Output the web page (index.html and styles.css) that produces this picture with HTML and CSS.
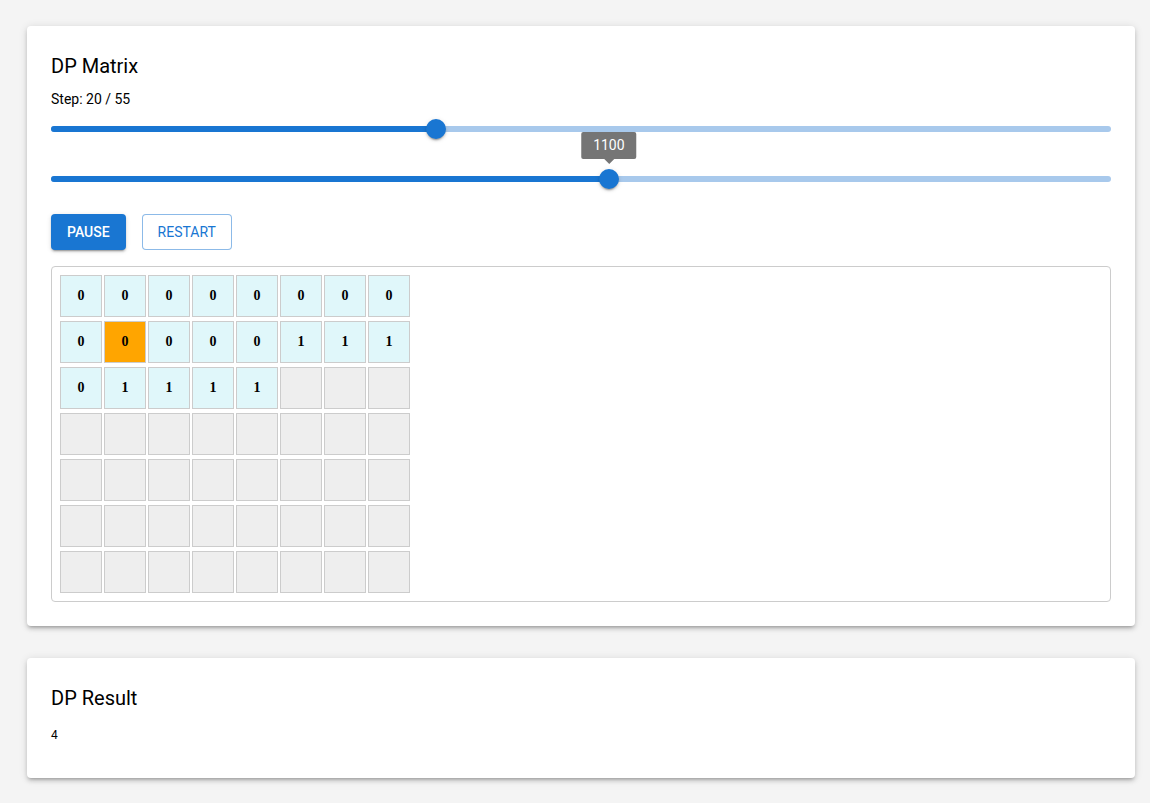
FILE: index.html
```html
<!DOCTYPE html>
<html>
<head>
<meta charset="utf-8">
<link rel="stylesheet" href="styles.css">
</head>
<body>
<div class="page">
  <div class="card">
    <div class="title">DP Matrix</div>
    <div class="step">Step: 20 / 55</div>
    <div class="slider">
      <div class="rail"></div>
      <div class="track" style="width:36.36%"></div>
      <div class="thumb" style="left:36.36%"></div>
    </div>
    <div class="slider">
      <div class="rail"></div>
      <div class="track" style="width:52.63%"></div>
      <div class="thumb" style="left:52.63%"><span class="label">1100</span></div>
    </div>
    <div class="buttons">
      <button class="btn contained">PAUSE</button>
      <button class="btn outlined">RESTART</button>
    </div>
    <div class="matrix">
      <div class="grid">
        <div class="cell done">0</div><div class="cell done">0</div><div class="cell done">0</div><div class="cell done">0</div><div class="cell done">0</div><div class="cell done">0</div><div class="cell done">0</div><div class="cell done">0</div>
        <div class="cell done">0</div><div class="cell current">0</div><div class="cell done">0</div><div class="cell done">0</div><div class="cell done">0</div><div class="cell done">1</div><div class="cell done">1</div><div class="cell done">1</div>
        <div class="cell done">0</div><div class="cell done">1</div><div class="cell done">1</div><div class="cell done">1</div><div class="cell done">1</div><div class="cell"></div><div class="cell"></div><div class="cell"></div>
        <div class="cell"></div><div class="cell"></div><div class="cell"></div><div class="cell"></div><div class="cell"></div><div class="cell"></div><div class="cell"></div><div class="cell"></div>
        <div class="cell"></div><div class="cell"></div><div class="cell"></div><div class="cell"></div><div class="cell"></div><div class="cell"></div><div class="cell"></div><div class="cell"></div>
        <div class="cell"></div><div class="cell"></div><div class="cell"></div><div class="cell"></div><div class="cell"></div><div class="cell"></div><div class="cell"></div><div class="cell"></div>
        <div class="cell"></div><div class="cell"></div><div class="cell"></div><div class="cell"></div><div class="cell"></div><div class="cell"></div><div class="cell"></div><div class="cell"></div>
      </div>
    </div>
  </div>
  <div class="card result">
    <div class="title">DP Result</div>
    <div class="value">4</div>
  </div>
</div>
</body>
</html>
```

FILE: styles.css
```css
* { box-sizing: border-box; }
html, body { margin: 0; padding: 0; }
body {
  background: #f4f4f4;
  font-family: Roboto, "Liberation Sans", Arial, sans-serif;
  color: #000;
  height: 803px;
  overflow: hidden;
}
.page {
  padding: 26px 15px 0 27px;
  display: flex;
  flex-direction: column;
  gap: 32px;
}
.card {
  background: #fff;
  border-radius: 4px;
  padding: 24px;
  box-shadow: 0 3px 3px -2px rgba(0,0,0,0.2), 0 3px 4px 0 rgba(0,0,0,0.14), 0 1px 8px 0 rgba(0,0,0,0.12);
}
.title {
  font-size: 20px;
  line-height: 32px;
  font-weight: 400;
  margin-bottom: 7px;
}
.step {
  font-size: 14px;
  line-height: 20px;
  margin-bottom: 5px;
}
.slider {
  position: relative;
  height: 30px;
  margin-bottom: 20px;
}
.rail, .track {
  position: absolute;
  left: 0;
  top: 12px;
  height: 6px;
  border-radius: 3px;
}
.rail { right: 0; background: #a8c9ec; }
.track { background: #1976d2; }
.thumb {
  position: absolute;
  top: 5px;
  width: 20px;
  height: 20px;
  margin-left: -10px;
  border-radius: 50%;
  background: #1976d2;
  box-shadow: 0 3px 1px -2px rgba(0,0,0,0.2), 0 2px 2px 0 rgba(0,0,0,0.14), 0 1px 5px 0 rgba(0,0,0,0.12);
}
.label {
  position: absolute;
  left: 50%;
  bottom: 30px;
  transform: translateX(-50%);
  background: #757575;
  color: #fff;
  font-size: 14px;
  font-weight: 400;
  line-height: 19px;
  padding: 4px 12px;
  border-radius: 2px;
  white-space: nowrap;
}
.label::after {
  content: "";
  position: absolute;
  left: 50%;
  bottom: -5px;
  margin-left: -5px;
  border-left: 5px solid transparent;
  border-right: 5px solid transparent;
  border-top: 5px solid #757575;
}
.buttons {
  display: flex;
  gap: 16px;
  margin-top: 0;
  margin-bottom: 16px;
}
.btn {
  font-family: Roboto, "Liberation Sans", Arial, sans-serif;
  font-size: 14px;
  font-weight: 500;
  height: 36px;
  line-height: 24px;
  border-radius: 4px;
  letter-spacing: 0;
  padding: 6px 16px;
}
.contained {
  background: #1976d2;
  color: #fff;
  border: none;
  box-shadow: 0 3px 1px -2px rgba(0,0,0,0.2), 0 2px 2px 0 rgba(0,0,0,0.14), 0 1px 5px 0 rgba(0,0,0,0.12);
}
.outlined {
  background: #fff;
  color: #1976d2;
  border: 1px solid rgba(25,118,210,0.5);
  font-weight: 400;
  padding: 5px 15px;
}
.matrix {
  border: 1px solid #ccc;
  border-radius: 4px;
  padding: 8px;
}
.grid {
  display: grid;
  grid-template-columns: repeat(8, 42px);
  column-gap: 2px;
  row-gap: 4px;
}
.cell {
  width: 42px;
  height: 42px;
  border: 1px solid #ccc;
  background: #eeeeee;
  display: flex;
  align-items: center;
  justify-content: center;
  font-family: "Liberation Serif", "Times New Roman", serif;
  font-weight: bold;
  font-size: 14px;
}
.cell.done { background: #e0f7fa; }
.cell.current { background: #ffa500; }
.result .title { margin-bottom: 11px; }
.value {
  font-size: 12px;
  line-height: 20px;
  margin-bottom: 9px;
}
```
